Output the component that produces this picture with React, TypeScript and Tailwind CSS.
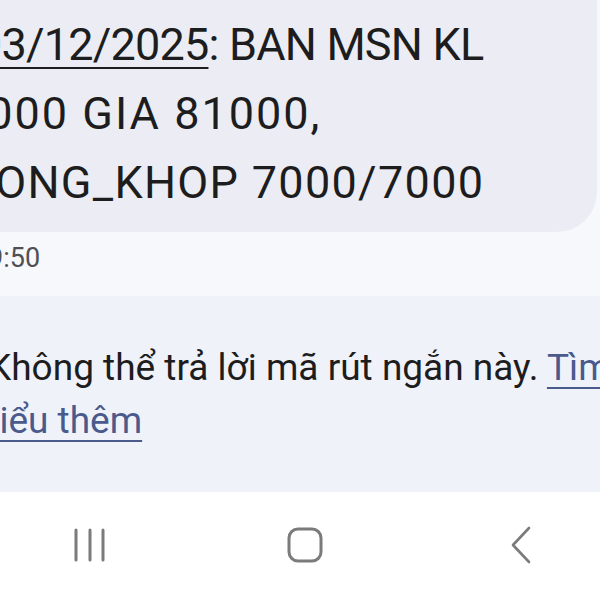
import React from "react";

export default function App() {
  return (
    <div
      className="w-[600px] h-[600px] overflow-hidden bg-[#f7f8fc] flex flex-col text-[#1d1d20]"
      style={{ fontFamily: "Roboto, 'Noto Sans', sans-serif" }}
    >
      {/* message area */}
      <div className="h-[296px] flex flex-col shrink-0">
        <div className="-ml-[40px] w-[637px] h-[232px] rounded-br-[40px] bg-[#ecedf4] pt-[10px] overflow-hidden">
          <div className="text-[45px] leading-[69px] whitespace-nowrap">
            <div className="ml-[17px] tracking-[-0.8px]">
              <span className="underline decoration-2 underline-offset-[7px]">03/12/2025</span>: BAN MSN KL
            </div>
            <div className="ml-[0px] tracking-[2px]">7000 GIA 81000,</div>
            <div className="-ml-[22px] tracking-[1.3px]">TRONG_KHOP 7000/7000</div>
          </div>
        </div>
        <div className="h-[64px] flex items-start">
          <div className="-ml-[12px] mt-[10px] text-[27px] leading-[32px] text-[#4f4f55] whitespace-nowrap">
            9:50
          </div>
        </div>
      </div>

      {/* info panel */}
      <div className="h-[196px] shrink-0 bg-[#f0f2f9] pt-[45px] overflow-hidden">
        <div className="-ml-[12px] text-[37px] leading-[53px] whitespace-nowrap text-[#1d1d20]">
          <div>
            Không thể trả lời mã rút ngắn này.{" "}
            <span className="text-[#4a5a8c] underline decoration-2 underline-offset-[7px]">Tìm</span>
          </div>
          <div className="-ml-[9px]">
            <span className="text-[#4a5a8c] underline decoration-2 underline-offset-[7px]">hiểu thêm</span>
          </div>
        </div>
      </div>

      {/* nav bar */}
      <div className="flex-1 bg-white flex items-center justify-between pl-[73px] pr-[68px] pb-[2px]">
        <svg width="34" height="36" viewBox="0 0 34 36" fill="none" stroke="#7b7b7b" strokeWidth="3" strokeLinecap="round">
          <line x1="3" y1="3" x2="3" y2="33" />
          <line x1="17" y1="3" x2="17" y2="33" />
          <line x1="30" y1="3" x2="30" y2="33" />
        </svg>
        <svg width="36" height="36" viewBox="0 0 36 36" fill="none" stroke="#7b7b7b" strokeWidth="3" className="-ml-[8px]">
          <rect x="2" y="2" width="32" height="32" rx="9" />
        </svg>
        <svg width="22" height="38" viewBox="0 0 22 38" fill="none" stroke="#7b7b7b" strokeWidth="2.6" strokeLinecap="round" strokeLinejoin="round">
          <polyline points="19,2 3,19 19,36" />
        </svg>
      </div>
    </div>
  );
}
